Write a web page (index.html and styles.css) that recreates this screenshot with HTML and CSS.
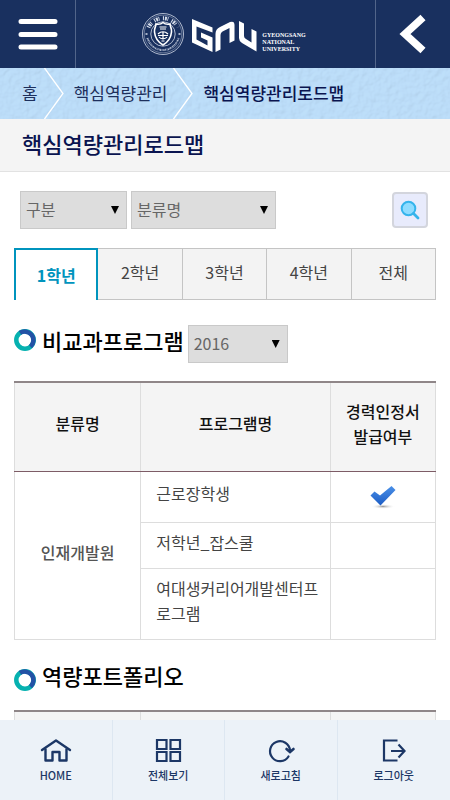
FILE: index.html
```html
<!DOCTYPE html>
<html lang="ko">
<head>
<meta charset="utf-8">
<meta name="viewport" content="width=device-width, initial-scale=1">
<title>핵심역량관리로드맵</title>
<link rel="stylesheet" href="styles.css">
</head>
<body>
<header class="topbar">
  <button class="topbar-btn" type="button" aria-label="메뉴">
    <svg width="40" height="32" viewBox="0 0 40 32"><path d="M3 3.500H37M3 16.500H37M3 29H37" stroke="#fff" stroke-width="5" stroke-linecap="round"/></svg>
  </button>
  <a class="brand" href="#">
    <svg class="seal" width="44" height="44" viewBox="0 0 44 44" fill="none" stroke="#d5dcea">
      <circle cx="22" cy="22" r="20.500" stroke-width=".8"/>
      <circle cx="22" cy="22" r="18.800" stroke-width=".4"/>
      <circle cx="22" cy="22" r="12.200" stroke-width=".8"/>
      <path d="M7.500 15.500A16 16 0 0 1 36.500 15.500" stroke-width="4" stroke-dasharray="1.100 .9 2 .7 .8 3.500"/>
      <path d="M6.500 26A16 16 0 0 0 37.500 26" stroke-width="2" stroke-dasharray=".8 .7 .5 .6"/>
      <path d="M22 10.500c2 1.800 4.500 2 7 1.500 0 3 2 4 1.500 8-.5 6-3.500 10-8.500 13-5-3-8-7-8.500-13-.5-4 1.500-5 1.500-8 2.500.5 5 .3 7-1.500z" stroke="#fff" stroke-width="1.600"/>
      <path d="M18.500 15h7M19 17h6M17 22c3-3 7-3 10 0M17 23.500h10M22 20v7M18 25c2 2.500 6 2.500 8 0M20.500 29h3" stroke="#fff" stroke-width="1.200"/>
      <path d="M4.500 22h2M37.500 22h2" stroke-width="1.500"/>
    </svg>
    <svg class="mark" width="66" height="35" viewBox="0 0 66 35" fill="#fff">
      <path d="M1 1 21.500 9.500V14.500L5.500 8.500V21.500L16.500 27.500V22.500L10 19.500V14.500L21.500 19.500V34L1 24.500z"/>
      <path d="M24.500 34V16Q24.500 11 29 9L39 4Q43.500 2.500 43.500 7V22.500L38.500 25V10L31.500 13.500Q29.500 14.500 29.500 17V31.500z"/>
      <path d="M48 3 53 5.500V18Q53 20 55 21L60.500 24.500V11L65.500 13.500V33.500L51 25Q48 23 48 20z"/>
    </svg>
    <span class="brand-name"><span>GYEONGSANG</span><span>NATIONAL</span><span>UNIVERSITY</span></span>
  </a>
  <button class="topbar-btn topbar-back" type="button" aria-label="뒤로">
    <svg width="28" height="40" viewBox="0 0 28 40"><path d="M24 3.500 6 20 24 36.500" fill="none" stroke="#fff" stroke-width="7.500"/></svg>
  </button>
</header>

<nav class="crumbs" aria-label="현재 위치">
  <svg class="texture" width="100%" height="100%" aria-hidden="true">
    <filter id="paper" x="0" y="0" width="100%" height="100%">
      <feTurbulence type="fractalNoise" baseFrequency=".18" numOctaves="2" seed="4" result="n"/>
      <feDiffuseLighting in="n" lighting-color="#c3e2fc" surfaceScale="1" diffuseConstant="1.100"><feDistantLight azimuth="45" elevation="65"/></feDiffuseLighting>
    </filter>
    <rect width="100%" height="100%" filter="url(#paper)"/>
  </svg>
  <a class="crumb" href="#">홈</a>
  <svg class="crumb-sep" width="20" height="51" viewBox="0 0 20 51" aria-hidden="true"><path d="M.5 0 19 25.500.5 51" fill="none" stroke="#fff" stroke-width="1.300"/></svg>
  <a class="crumb" href="#">핵심역량관리</a>
  <svg class="crumb-sep" width="20" height="51" viewBox="0 0 20 51" aria-hidden="true"><path d="M.5 0 19 25.500.5 51" fill="none" stroke="#fff" stroke-width="1.300"/></svg>
  <a class="crumb crumb-current" href="#" aria-current="page">핵심역량관리로드맵</a>
</nav>

<h1 class="page-title">핵심역량관리로드맵</h1>

<main class="content">
  <form class="filters">
    <span class="select select-type"><select aria-label="구분"><option>구분</option></select></span>
    <span class="select select-name"><select aria-label="분류명"><option>분류명</option></select></span>
    <button class="search" type="button" aria-label="검색">
      <svg width="20" height="20" viewBox="0 0 20 20"><circle cx="8.500" cy="8.500" r="6.800" fill="#8fdcff" stroke="#35b4ec" stroke-width="2"/><path d="M13.500 13.500 18 18" stroke="#35b4ec" stroke-width="2.800" stroke-linecap="round"/></svg>
    </button>
  </form>

  <div class="tabs" role="tablist">
    <button class="tab tab-active" type="button" role="tab" aria-selected="true">1학년</button>
    <button class="tab" type="button" role="tab">2학년</button>
    <button class="tab" type="button" role="tab">3학년</button>
    <button class="tab" type="button" role="tab">4학년</button>
    <button class="tab" type="button" role="tab">전체</button>
  </div>

  <div class="section-head">
    <svg class="ring" width="22" height="22" viewBox="0 0 22 22" fill="none" stroke-width="4.500"><circle cx="11" cy="11" r="8.700" stroke="#06b1b0"/><path d="M6 3.900A8.700 8.700 0 0 1 16.500 17.700" stroke="#2352a5"/></svg>
    <h2>비교과프로그램</h2>
    <span class="select select-year"><select aria-label="연도"><option>2016</option></select></span>
  </div>

  <table class="grid">
    <colgroup><col class="col-cat"><col class="col-prog"><col class="col-cert"></colgroup>
    <thead>
      <tr><th>분류명</th><th>프로그램명</th><th>경력인정서<br>발급여부</th></tr>
    </thead>
    <tbody>
      <tr>
        <td class="cat" rowspan="3">인재개발원</td>
        <td>근로장학생</td>
        <td class="cert">
          <svg width="28" height="26" viewBox="0 0 28 26" role="img" aria-label="발급">
            <defs>
              <linearGradient id="tick" x1="0" y1="0" x2="0" y2="1"><stop offset="0" stop-color="#4a90e8"/><stop offset="1" stop-color="#1c5cc4"/></linearGradient>
              <radialGradient id="shade"><stop offset="0" stop-color="#999"/><stop offset="1" stop-color="#fff" stop-opacity="0"/></radialGradient>
            </defs>
            <ellipse cx="14" cy="22.500" rx="12" ry="2.500" fill="url(#shade)"/>
            <path d="M1.500 11.500 5.500 7.500 11 11.500 22.500 2 26.500 6 11.500 21.500z" fill="url(#tick)"/>
          </svg>
        </td>
      </tr>
      <tr><td>저학년_잡스쿨</td><td></td></tr>
      <tr><td>여대생커리어개발센터프로그램</td><td></td></tr>
    </tbody>
  </table>

  <div class="section-head section-head-plain">
    <svg class="ring" width="22" height="22" viewBox="0 0 22 22" fill="none" stroke-width="4.500"><circle cx="11" cy="11" r="8.700" stroke="#06b1b0"/><path d="M6 3.900A8.700 8.700 0 0 1 16.500 17.700" stroke="#2352a5"/></svg>
    <h2>역량포트폴리오</h2>
  </div>

  <table class="grid">
    <colgroup><col class="col-cat"><col class="col-prog"><col class="col-cert"></colgroup>
    <thead><tr><th></th><th></th><th></th></tr></thead>
  </table>
</main>

<nav class="bottom" aria-label="바로가기">
  <a href="#">
    <svg width="32" height="26" viewBox="0 0 32 26" fill="none" stroke="#1c3766" stroke-width="2.400" stroke-linejoin="round"><path d="M2 13 16 3.500 30 13" stroke-linecap="round"/><path d="M5.500 11.500V23.500H12.500V15H19.500V23.500H26.500V11.500"/></svg>
    <span>HOME</span>
  </a>
  <a href="#">
    <svg width="32" height="26" viewBox="0 0 32 26" fill="none" stroke="#1c3766" stroke-width="2.200"><path d="M5 3h9.500v9H5zM18.500 3h9.500v9H18.500zM5 15h9.500v9H5zM18.500 15h9.500v9H18.500z"/></svg>
    <span>전체보기</span>
  </a>
  <a href="#">
    <svg width="32" height="26" viewBox="0 0 32 26" fill="none" stroke="#1c3766" stroke-width="2.200" stroke-linecap="round"><path d="M23.500 19.500A10 10 0 1 1 25 13.500"/><path d="M21.500 12 25 15 28.500 12" stroke-width="2.600"/></svg>
    <span>새로고침</span>
  </a>
  <a href="#">
    <svg width="32" height="26" viewBox="0 0 32 26" fill="none" stroke="#1c3766" stroke-width="2.200"><path d="M19.500 3.500H6V23.500H19.500M13 14H26"/><path d="M20.500 7.500 26.500 14 20.500 20.500"/></svg>
    <span>로그아웃</span>
  </a>
</nav>
</body>
</html>
```
FILE: styles.css
```css
* {
  box-sizing: border-box;
}

body {
  margin: 0;
  height: 100vh;
  display: flex;
  flex-direction: column;
  background: #fff;
  color: #444;
  font: 16px/25px "Noto Sans CJK KR", sans-serif;
}

a {
  color: inherit;
  text-decoration: none;
}

button,
select {
  font: inherit;
  color: inherit;
}

.topbar {
  flex: none;
  display: flex;
  height: 68px;
  background: #19305f;
}

.topbar-btn {
  width: 76px;
  padding: 0;
  display: grid;
  place-items: center;
  background: none;
  border: 0;
  border-right: 1px solid #52658a;
}

.topbar-back {
  width: 75px;
  border-right: 0;
  border-left: 1px solid #52658a;
}

.brand {
  flex: 1;
  display: flex;
  align-items: center;
  justify-content: center;
  padding-right: 4px;
  color: #fff;
}

.seal {
  margin-right: 6px;
}

.mark {
  margin-top: 2px;
}

.brand-name {
  margin: 16px 0 0 5px;
  display: flex;
  flex-direction: column;
  font: 700 6px/7px "Liberation Serif", serif;
}

.crumbs {
  flex: none;
  position: relative;
  display: flex;
  align-items: center;
  height: 51px;
  padding-left: 22px;
  overflow: hidden;
  background: #b7d9f6;
  font-size: 17px;
  color: #1d2f5c;
}

.texture {
  position: absolute;
  inset: 0;
  opacity: 0.4;
}

.crumb,
.crumb-sep {
  position: relative;
}

.crumb {
  padding-bottom: 2px;
}

.crumb-sep {
  margin: 0 10px 0 6px;
}

.crumb-current {
  font-weight: 500;
  color: #0a1450;
}

.page-title {
  flex: none;
  margin: 0;
  padding: 0 22px 4px;
  background: #f4f4f4;
  border-bottom: 1px solid #e2e2e2;
  font-size: 22px;
  font-weight: 500;
  line-height: 48px;
  color: #0a1450;
}

.content {
  flex: 1;
  min-height: 0;
  padding: 19px 14px 0;
  overflow-y: auto;
  scrollbar-width: none;
}

.filters {
  display: flex;
  align-items: center;
  gap: 4px;
  padding: 0 8px 0 6px;
}

.select {
  position: relative;
  display: flex;
}

.select::after {
  content: "";
  position: absolute;
  right: 8px;
  top: 15px;
  width: 8px;
  height: 8px;
  background: #000;
  clip-path: polygon(0 0, 100% 0, 50% 100%);
  pointer-events: none;
}

.select select {
  width: 100%;
  height: 38px;
  padding: 0 5px 2px;
  appearance: none;
  background: #ddd;
  border: 1px solid #c9c9c9;
  border-radius: 0;
  color: #666;
}

.select-type {
  width: 107px;
}

.select-name {
  width: 145px;
}

.select-year {
  width: 100px;
}

.search {
  width: 36px;
  height: 36px;
  margin-left: auto;
  padding: 0;
  display: grid;
  place-items: center;
  background: #e8ebfc;
  border: 2px solid #d3d5dd;
  border-radius: 4px;
}

.tabs {
  display: grid;
  grid-template-columns: repeat(5, 1fr);
  height: 52px;
  margin-top: 19px;
}

.tab {
  padding: 0 0 3px;
  background: #f3f3f3;
  border: 1px solid #c4c4c4;
  border-left: 0;
}

.tab-active {
  padding: 0;
  background: #fff;
  border: 2px solid #0094bd;
  border-bottom: 0;
  color: #0094bd;
  font-weight: 700;
}

.section-head {
  display: flex;
  align-items: center;
  gap: 4px;
  margin: 25px 0 18px;
}

.section-head h2 {
  margin: 0;
  padding-bottom: 8px;
  font-size: 22px;
  font-weight: 500;
  line-height: 30px;
  color: #000;
}

.ring {
  margin: 0 2px 8px 0;
}

.section-head-plain {
  margin: 20px 0 12px;
}

.section-head-plain .ring {
  margin: 2px 2px 0 0;
}

.grid {
  width: 100%;
  table-layout: fixed;
  border-collapse: collapse;
}

.col-cat {
  width: 30%;
}

.col-prog {
  width: 45%;
}

.col-cert {
  width: 25%;
}

.grid th,
.grid td {
  border: 1px solid #ddd;
}

.grid th {
  height: 89px;
  padding: 0 0 6px;
  background: #f4f4f4;
  border-top: 2px solid #8f8688;
  border-bottom: 1px solid #7d5c66;
  font-weight: 500;
  color: #111;
}

.grid td {
  height: 46px;
  padding: 7px 10px 13px 15px;
  word-break: break-all;
}

.grid tbody tr:first-child td {
  height: 51px;
}

.grid tbody tr:last-child td {
  height: 71px;
}

.grid .cat {
  padding: 0 0 6px;
  text-align: center;
  font-weight: 500;
  color: #555;
}

.grid .cert {
  padding: 0;
  text-align: center;
}

.cert svg {
  display: block;
  margin: 0 auto;
}

.bottom {
  flex: none;
  display: grid;
  grid-template-columns: repeat(4, 1fr);
  height: 80px;
  background: #ecf2f8;
  color: #1c3766;
}

.bottom a {
  display: flex;
  flex-direction: column;
  align-items: center;
  padding-top: 17px;
  border-right: 1px solid #dde7f1;
  font-size: 11px;
  font-weight: 500;
}

.bottom a:last-child {
  border-right: 0;
}
```
